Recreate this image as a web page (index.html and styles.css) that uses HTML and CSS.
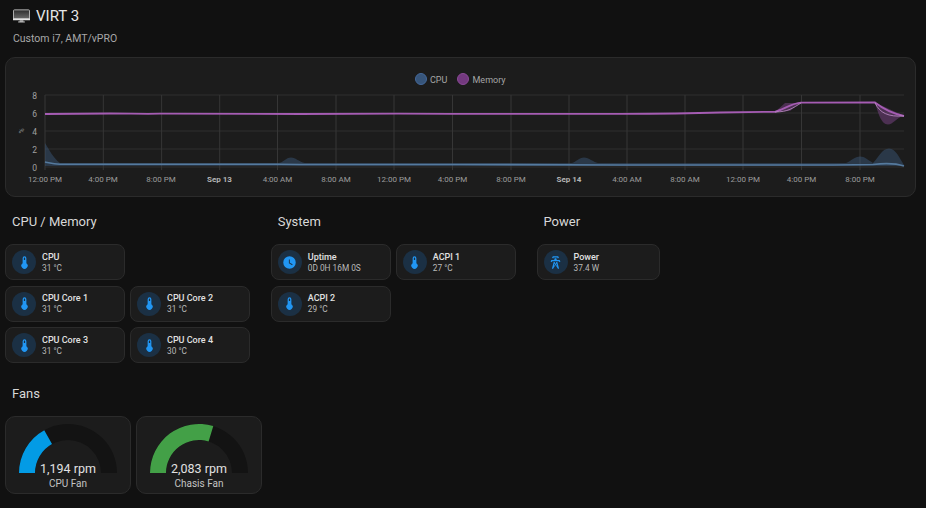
FILE: index.html
```html
<!DOCTYPE html>
<html lang="en">
<head>
<meta charset="utf-8">
<title>VIRT 3</title>
<link rel="stylesheet" href="styles.css">
</head>
<body>
<svg class="defs" width="0" height="0" aria-hidden="true">
  <defs>
    <symbol id="thermo" viewBox="0 0 24 24"><path d="M15 13V5A3 3 0 0 0 9 5V13A5 5 0 1 0 15 13M12 4A1 1 0 0 1 13 5V8H11V5A1 1 0 0 1 12 4Z"/></symbol>
    <symbol id="clock" viewBox="0 0 24 24"><path d="M12,2A10,10 0 0,0 2,12A10,10 0 0,0 12,22A10,10 0 0,0 22,12A10,10 0 0,0 12,2M16.2,16.2L11,13V7H12.5V12.2L17,14.9L16.2,16.2Z"/></symbol>
    <symbol id="tower" viewBox="0 0 24 24"><path d="M8.28,5.45L6.5,4.55L7.76,2H16.23L17.5,4.55L15.72,5.44L15,4H9L8.28,5.45M18.62,8H14.09L13.3,5H10.7L9.91,8H5.38L4.1,10.55L5.89,11.44L6.62,10H17.38L18.1,11.45L19.89,10.56L18.62,8M17.77,22H15.7L15.46,21.1L12,15.9L8.53,21.1L8.3,22H6.23L9.12,11H11.19L10.83,12.35L12,14.1L13.16,12.35L12.81,11H14.88L17.77,22M11.4,15L10.5,13.65L9.32,18.13L11.4,15M14.68,18.13L13.5,13.65L12.6,15L14.68,18.13Z"/></symbol>
  </defs>
</svg>

<header class="head">
  <h1 class="title">
    <svg class="monitor" viewBox="0 0 18 14" aria-hidden="true">
      <defs><linearGradient id="scr" x1="0" y1="0" x2="0" y2="1"><stop offset="0" stop-color="#2c2c2c"/><stop offset="1" stop-color="#6e6e6e"/></linearGradient></defs>
      <rect x="0.5" y="0.5" width="17" height="10" rx="1" fill="url(#scr)" stroke="#b8b8b8"/>
      <rect x="0" y="9.5" width="18" height="2" fill="#e4e4e4"/>
      <rect x="7" y="11.5" width="4" height="1.5" fill="#bbb"/>
      <rect x="5.5" y="12.8" width="7" height="1" fill="#ddd"/>
    </svg>
    <span>VIRT 3</span>
  </h1>
  <p class="subtitle">Custom i7, AMT/vPRO</p>
</header>

<section class="card chart-card">
  <svg class="chart" viewBox="6 58 909 138" role="img" aria-label="CPU and Memory usage">
    <g class="legend">
      <circle cx="421" cy="79" r="5.5" class="leg-cpu"/>
      <text x="430" y="82.5">CPU</text>
      <circle cx="463" cy="79" r="5.5" class="leg-mem"/>
      <text x="472.5" y="82.5">Memory</text>
    </g>
    <g class="grid">
      <path d="M45 95H904M45 113H904M45 131H904M45 149H904M45 167H904"/>
      <path class="grid-v" d="M45 95V170M103.300 95V170M161.600 95V170M219.700 95V170M277.500 95V170M336 95V170M394 95V170M452.500 95V170M511 95V170M569 95V170M627 95V170M685 95V170M743 95V170M801.500 95V170M860 95V170"/>
    </g>
    <g class="ylab">
      <text x="37" y="98.500">8</text>
      <text x="37" y="116.500">6</text>
      <text x="37" y="134.500">4</text>
      <text x="37" y="152.500">2</text>
      <text x="37" y="170.500">0</text>
    </g>
    <text class="unit" x="24" y="131" transform="rotate(-90 24 131)">%</text>
    <g class="xlab">
      <text x="45" y="182">12:00 PM</text>
      <text x="103" y="182">4:00 PM</text>
      <text x="161" y="182">8:00 PM</text>
      <text x="219.500" y="182" class="day">Sep 13</text>
      <text x="277.500" y="182">4:00 AM</text>
      <text x="336" y="182">8:00 AM</text>
      <text x="394" y="182">12:00 PM</text>
      <text x="452.500" y="182">4:00 PM</text>
      <text x="511" y="182">8:00 PM</text>
      <text x="569" y="182" class="day">Sep 14</text>
      <text x="627" y="182">4:00 AM</text>
      <text x="685" y="182">8:00 AM</text>
      <text x="743" y="182">12:00 PM</text>
      <text x="801.500" y="182">4:00 PM</text>
      <text x="860" y="182">8:00 PM</text>
    </g>
    <path class="cpu-band" d="M45 143C49 149 53 158 60 163H278C283 163 286 157.500 291 157.500C296 157.500 299 162 305 163H572C576 162 579 157.500 584 157.500C589 157.500 593 162 598 163H846C851 161 855 156.500 860 156.500C865 156.500 868 160 873 163C878 158 882 148.500 889 148.500C896 148.500 900 159 904 165V166H45Z"/>
    <path class="cpu-line" d="M45 162C50 163 54 164 60 164.300H280L300 164.500H460L620 165H780C820 165 840 165 873 164.500C885 163 895 163 904 166"/>
    <path class="mem-band" d="M775 112L785 103H800L790 111L775 112ZM875 103C880 104 888 109 904 115.500C896 118 893 124.500 888 124.500C881 124.500 878 112 875 103Z"/>
    <path class="mem-line" d="M45 114C70 114 90 113.500 110 113.500C130 113.500 140 114 160 113.700C190 114 240 114 300 114C340 113.500 400 113.500 450 113.800C500 113.500 560 113.700 620 113.800C660 113.800 690 113.500 720 112.500L775 111.800C782 110.500 792 103 801 102.700L875 102.500C882 108 890 113 904 116"/>
    <path class="mem-thin" d="M775 112C788 112 793 108 801 103M875 103C880 113 888 117 904 116"/>
  </svg>
</section>

<div class="groups">
  <section class="group">
    <h2 class="group-title">CPU / Memory</h2>
    <div class="tiles">
      <div class="tile"><span class="badge"><svg class="ico"><use href="#thermo"/></svg></span><div class="info"><b>CPU</b><small>31 °C</small></div></div>
      <div class="blank"></div>
      <div class="tile"><span class="badge"><svg class="ico"><use href="#thermo"/></svg></span><div class="info"><b>CPU Core 1</b><small>31 °C</small></div></div>
      <div class="tile"><span class="badge"><svg class="ico"><use href="#thermo"/></svg></span><div class="info"><b>CPU Core 2</b><small>31 °C</small></div></div>
      <div class="tile"><span class="badge"><svg class="ico"><use href="#thermo"/></svg></span><div class="info"><b>CPU Core 3</b><small>31 °C</small></div></div>
      <div class="tile"><span class="badge"><svg class="ico"><use href="#thermo"/></svg></span><div class="info"><b>CPU Core 4</b><small>30 °C</small></div></div>
    </div>
  </section>
  <section class="group">
    <h2 class="group-title">System</h2>
    <div class="tiles">
      <div class="tile"><span class="badge"><svg class="ico"><use href="#clock"/></svg></span><div class="info"><b>Uptime</b><small>0D 0H 16M 0S</small></div></div>
      <div class="tile"><span class="badge"><svg class="ico"><use href="#thermo"/></svg></span><div class="info"><b>ACPI 1</b><small>27 °C</small></div></div>
      <div class="tile"><span class="badge"><svg class="ico"><use href="#thermo"/></svg></span><div class="info"><b>ACPI 2</b><small>29 °C</small></div></div>
    </div>
  </section>
  <section class="group power">
    <h2 class="group-title">Power</h2>
    <div class="tiles single">
      <div class="tile"><span class="badge"><svg class="ico"><use href="#tower"/></svg></span><div class="info"><b>Power</b><small>37.4 W</small></div></div>
    </div>
  </section>
</div>

<section class="fans">
  <h2 class="group-title">Fans</h2>
  <div class="fan-row">
    <div class="card fan">
      <svg class="gauge" viewBox="0 0 100 51" aria-hidden="true">
        <path class="arc-bg" d="M1 50A49 49 0 0 1 99 50H83A33 33 0 0 0 17 50Z"/>
        <path class="arc-blue" d="M1 50A49 49 0 0 1 26.250 7.150L34 21.100A33 33 0 0 0 17 50Z"/>
      </svg>
      <div class="fan-val">1,194 rpm</div>
      <div class="fan-name">CPU Fan</div>
    </div>
    <div class="card fan">
      <svg class="gauge" viewBox="0 0 100 51" aria-hidden="true">
        <path class="arc-bg" d="M1 50A49 49 0 0 1 99 50H83A33 33 0 0 0 17 50Z"/>
        <path class="arc-green" d="M1 50A49 49 0 0 1 64.300 3.100L59.600 18.400A33 33 0 0 0 17 50Z"/>
      </svg>
      <div class="fan-val">2,083 rpm</div>
      <div class="fan-name">Chasis Fan</div>
    </div>
  </div>
</section>
</body>
</html>
```

FILE: styles.css
```css
* { box-sizing: border-box; }
html, body { margin: 0; padding: 0; }
body {
  width: 926px;
  height: 508px;
  overflow: hidden;
  background: #111111;
  color: #e1e1e1;
  font-family: Roboto, "Liberation Sans", sans-serif;
}
.defs { position: absolute; }

.head { padding: 6px 0 0 13px; height: 57px; }
.title {
  display: flex;
  align-items: center;
  gap: 6px;
  margin: 0;
  height: 19px;
  font-size: 15px;
  font-weight: 400;
  color: #e6e6e6;
}
.monitor { width: 17px; height: 14px; flex: none; }
.subtitle {
  margin: 7px 0 0;
  font-size: 10.500px;
  line-height: 13px;
  color: #a8a8a8;
}

.card {
  background: #1c1c1c;
  border: 1px solid #2b2b2b;
  border-radius: 10px;
}
.chart-card { margin-left: 5px; width: 911px; height: 140px; }
.chart { display: block; width: 909px; height: 138px; }

.legend text { font-size: 9px; fill: #a6a6a6; }
.leg-cpu { fill: #37557a; stroke: #44689a; }
.leg-mem { fill: #73397f; stroke: #8a4a96; }
.grid path { fill: none; stroke: #2e2e2e; stroke-width: 1; }
.grid .grid-v { stroke: #363636; }
.ylab text { font-size: 8.500px; fill: #a0a0a0; text-anchor: end; }
.unit { font-size: 7px; fill: #8a8a8a; text-anchor: middle; }
.xlab text { font-size: 8px; fill: #9c9c9c; text-anchor: middle; }
.xlab .day { font-weight: 700; fill: #b4b4b4; }

.cpu-band { fill: #3d5f85; fill-opacity: 0.42; }
.cpu-line { fill: none; stroke: #557a9e; stroke-width: 1.600; }
.mem-band { fill: #7c4488; fill-opacity: 0.5; }
.mem-line { fill: none; stroke: #a55cb3; stroke-width: 1.800; }
.mem-thin { fill: none; stroke: #c391cc; stroke-width: 0.800; }

.groups { display: flex; padding-left: 5px; margin-top: 16px; }
.group { width: 265.750px; flex: none; }
.group-title {
  margin: 0 0 13px 7px;
  font-size: 13px;
  line-height: 18px;
  font-weight: 400;
  color: #d8d8d8;
}
.tiles {
  display: grid;
  grid-template-columns: 120px 120px;
  gap: 5.500px 5px;
}
.tiles.single { grid-template-columns: 123px; }
.tile {
  height: 36px;
  display: flex;
  align-items: center;
  gap: 6px;
  padding-left: 6px;
  background: #1c1c1c;
  border: 1px solid #2b2b2b;
  border-radius: 8px;
}
.badge {
  width: 24px;
  height: 24px;
  flex: none;
  display: flex;
  align-items: center;
  justify-content: center;
  border-radius: 50%;
  background: #1b3044;
}
.ico { width: 15px; height: 15px; fill: #2196f3; display: block; }
.info { display: flex; flex-direction: column; min-width: 0; }
.info b { font-size: 9px; line-height: 12px; font-weight: 500; color: #e1e1e1; }
.info small { font-size: 8.300px; line-height: 11px; color: #b9b9b9; }

.fans { padding-left: 5px; margin-top: 22px; }
.fan-row { display: flex; gap: 5px; }
.fan {
  width: 126px;
  height: 78px;
  display: flex;
  flex-direction: column;
  align-items: center;
  padding-top: 6px;
}
.gauge { width: 100px; height: 51px; display: block; flex: none; }
.arc-bg { fill: #131313; }
.arc-blue { fill: #039be5; }
.arc-green { fill: #43a047; }
.fan-val {
  margin-top: -13px;
  font-size: 12.500px;
  line-height: 15px;
  color: #e1e1e1;
}
.fan-name { margin-top: 2px; font-size: 10px; line-height: 12px; color: #c4c4c4; }
```
